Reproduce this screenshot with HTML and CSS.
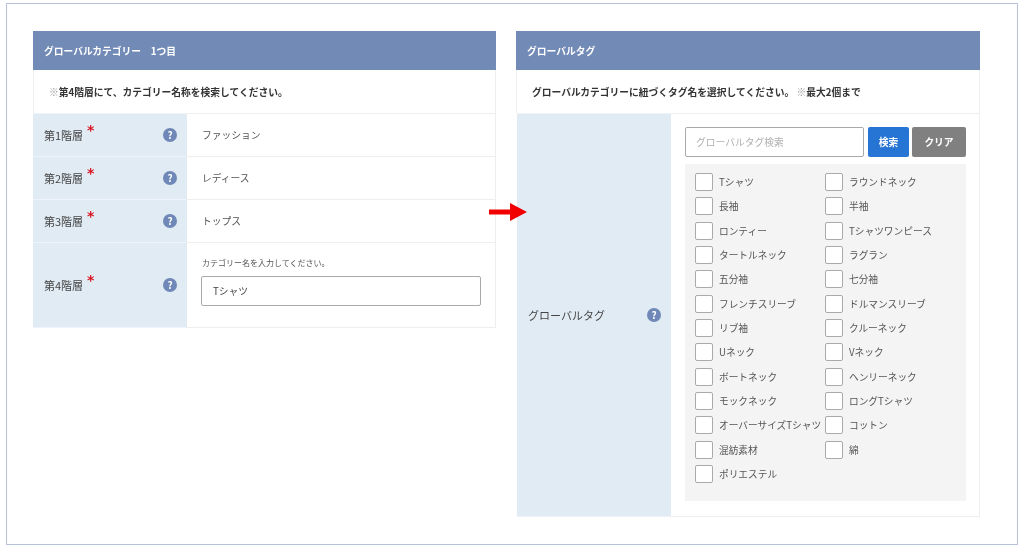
FILE: index.html
```html
<!DOCTYPE html>
<html lang="ja">
<head>
<meta charset="utf-8">
<title>グローバルカテゴリー</title>
<link rel="stylesheet" href="styles.css">
</head>
<body>
<main class="frame">
  <section class="panel panel-left">
    <h2 class="panel-head">グローバルカテゴリー　1つ目</h2>
    <p class="panel-note"><span class="mark">※</span>第4階層にて、カテゴリー名称を検索してください。</p>
    <div class="row">
      <div class="row-label"><span class="label-text">第1階層</span><span class="req">*</span><span class="help">?</span></div>
      <div class="row-value row-text">ファッション</div>
    </div>
    <div class="row">
      <div class="row-label"><span class="label-text">第2階層</span><span class="req">*</span><span class="help">?</span></div>
      <div class="row-value row-text">レディース</div>
    </div>
    <div class="row">
      <div class="row-label"><span class="label-text">第3階層</span><span class="req">*</span><span class="help">?</span></div>
      <div class="row-value row-text">トップス</div>
    </div>
    <div class="row row-tall">
      <div class="row-label"><span class="label-text">第4階層</span><span class="req">*</span><span class="help">?</span></div>
      <div class="row-value row-input">
        <div class="hint">カテゴリー名を入力してください。</div>
        <div class="field field-full">Tシャツ</div>
      </div>
    </div>
  </section>

  <section class="panel panel-right">
    <h2 class="panel-head">グローバルタグ</h2>
    <p class="panel-note">グローバルカテゴリーに紐づくタグ名を選択してください。&nbsp;<span class="mark">※</span>最大2個まで</p>
    <div class="row row-fill">
      <div class="row-label"><span class="label-text">グローバルタグ</span><span class="help">?</span></div>
      <div class="row-value row-tags">
        <div class="search">
          <div class="field field-search">グローバルタグ検索</div>
          <div class="btn btn-blue">検索</div>
          <div class="btn btn-gray">クリア</div>
        </div>
        <div class="tags">
          <div class="tag"><i class="box"></i>Tシャツ</div>
          <div class="tag"><i class="box"></i>ラウンドネック</div>
          <div class="tag"><i class="box"></i>長袖</div>
          <div class="tag"><i class="box"></i>半袖</div>
          <div class="tag"><i class="box"></i>ロンティー</div>
          <div class="tag"><i class="box"></i>Tシャツワンピース</div>
          <div class="tag"><i class="box"></i>タートルネック</div>
          <div class="tag"><i class="box"></i>ラグラン</div>
          <div class="tag"><i class="box"></i>五分袖</div>
          <div class="tag"><i class="box"></i>七分袖</div>
          <div class="tag"><i class="box"></i>フレンチスリーブ</div>
          <div class="tag"><i class="box"></i>ドルマンスリーブ</div>
          <div class="tag"><i class="box"></i>リブ袖</div>
          <div class="tag"><i class="box"></i>クルーネック</div>
          <div class="tag"><i class="box"></i>Uネック</div>
          <div class="tag"><i class="box"></i>Vネック</div>
          <div class="tag"><i class="box"></i>ボートネック</div>
          <div class="tag"><i class="box"></i>ヘンリーネック</div>
          <div class="tag"><i class="box"></i>モックネック</div>
          <div class="tag"><i class="box"></i>ロングTシャツ</div>
          <div class="tag"><i class="box"></i>オーバーサイズTシャツ</div>
          <div class="tag"><i class="box"></i>コットン</div>
          <div class="tag"><i class="box"></i>混紡素材</div>
          <div class="tag"><i class="box"></i>綿</div>
          <div class="tag"><i class="box"></i>ポリエステル</div>
        </div>
      </div>
    </div>
  </section>

  <svg class="arrow" width="40" height="20" viewBox="0 0 40 20" aria-hidden="true">
    <path d="M0 7.5H21V1L38 10L21 19V12.5H0Z" fill="#f00000"/>
  </svg>
</main>
</body>
</html>
```
FILE: styles.css
```css
* { box-sizing: border-box; }
html, body { margin: 0; padding: 0; background: #fff; }
body {
  width: 1024px;
  height: 553px;
  overflow: hidden;
  padding: 3px 6px 8px;
  font-family: "Noto Sans CJK JP", "Noto Sans", sans-serif;
  color: #555;
}
.frame {
  position: relative;
  display: flex;
  align-items: flex-start;
  gap: 20px;
  height: 542px;
  padding: 27px 37px 0 26px;
  border: 1px solid #b4c1d9;
  filter: blur(0.3px);
}
.panel { width: 464px; flex: none; }
.panel-left { width: 463px; }
.panel-head {
  margin: 0;
  height: 39px;
  padding: 0 11px;
  display: flex;
  align-items: center;
  background: #728ab6;
  color: #fff;
  font-size: 9.75px;
  font-weight: 700;
}
.panel-note {
  margin: 0;
  height: 43px;
  padding: 0 15px;
  display: flex;
  align-items: center;
  background: #fff;
  border: 1px solid #eeeeee;
  border-top: 0;
  border-bottom: 0;
  color: #333;
  font-size: 9.75px;
  font-weight: 700;
}
.mark { color: #999; font-weight: 400; }
.row { display: flex; height: 43px; }
.row-tall { height: 86px; }
.row-fill { height: 404px; margin-left: 1px; }
.row-label {
  width: 154px;
  flex: none;
  display: flex;
  align-items: center;
  padding: 0 10px 0 11px;
  background: #e1ebf4;
  border-top: 1px solid #edf3f8;
  font-size: 11px;
  color: #444;
}
.req {
  margin: -11px 0 0 4px;
  color: #d9121f;
  font-family: "DejaVu Sans", sans-serif;
  font-size: 14px;
  line-height: 14px;
  font-weight: 700;
}
.help {
  margin-left: auto;
  width: 14px;
  height: 14px;
  border-radius: 50%;
  background: #6f88b7;
  color: #fff;
  font-size: 10px;
  font-weight: 700;
  line-height: 14px;
  text-align: center;
}
.row-value {
  flex: 1;
  display: flex;
  align-items: center;
  padding: 0 14px;
  background: #fff;
  border-right: 1px solid #eeeeee;
  border-top: 1px solid #eeeeee;
  font-size: 9.75px;
  color: #555;
}
.row-text { padding-left: 15px; }
.row-tall .row-value,
.row-fill .row-value { border-bottom: 1px solid #eeeeee; }
.row-tall .row-label,
.row-fill .row-label { border-bottom: 1px solid #edf3f8; }
.row-input {
  flex-direction: column;
  align-items: stretch;
  padding-top: 14px;
}
.hint { font-size: 8px; line-height: 12px; color: #555; margin: 0 0 7px 1px; }
.field {
  display: flex;
  align-items: center;
  background: #fff;
  border: 1px solid #aaaaaa;
  border-radius: 2px;
  font-size: 9.75px;
}
.field-full { height: 30px; padding: 0 11px; color: #444; }
.row-tags {
  flex-direction: column;
  align-items: stretch;
  padding: 13px 13px 0 14px;
}
.search { display: flex; height: 30px; }
.field-search { width: 179px; padding: 0 10px; color: #b0b0b0; }
.btn {
  display: flex;
  align-items: center;
  justify-content: center;
  border-radius: 2px;
  color: #fff;
  font-size: 9.75px;
  font-weight: 700;
}
.btn-blue { width: 41px; margin-left: 4px; background: #2674d4; }
.btn-gray { width: 54px; margin-left: 3px; background: #808080; }
.tags {
  margin-top: 7px;
  height: 337px;
  padding: 9px 10px 0;
  background: #f4f4f4;
  display: grid;
  grid-template-columns: 130px 1fr;
  grid-auto-rows: 24.35px;
}
.tag {
  display: flex;
  align-items: flex-start;
  font-size: 9.7px;
  line-height: 18px;
  color: #555;
  white-space: nowrap;
}
.box {
  width: 18px;
  height: 18px;
  flex: none;
  margin-right: 6px;
  background: #fff;
  border: 1px solid #aaaaaa;
  border-radius: 2px;
}
.arrow { position: absolute; left: 482px; top: 198px; }
```
